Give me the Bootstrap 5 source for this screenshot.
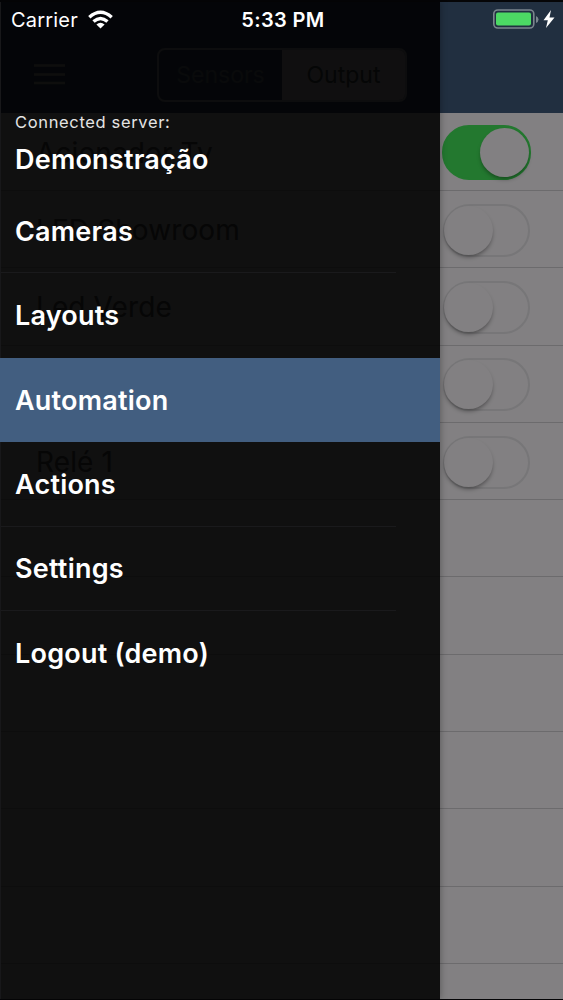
<!DOCTYPE html>
<html lang="en">
<head>
<meta charset="utf-8">
<meta name="viewport" content="width=device-width, initial-scale=1">
<title>Automation</title>
<link href="https://cdn.jsdelivr.net/npm/bootstrap@5.3.0/dist/css/bootstrap.min.css" rel="stylesheet">
<style>
body{font-family:Inter,"Liberation Sans",sans-serif;background:#050507;height:1000px}
.phone{width:563px;height:1000px;background:#050507}
.screen{height:999px;padding-top:2px}
.page-body{height:997px;background:#828082}
.topbar{height:111px;background:#212f40;padding:46px 156px 11px 34px}
.segmented{width:250px;height:54px;border:2px solid #6a6a70;border-radius:8px}
.segment{font-size:23px;color:#4c5058}
.segment.on{background:#807e80;color:#2c3034}
.device{height:77.3px;border-bottom:1px solid #6c6b6d;padding:2px 33px 0 36px;font-size:28px;color:#303030}
.device:first-child{height:78px}
.device span:first-child{letter-spacing:.1px}
.toggle{width:87px;height:53px;border-radius:27px;border:2px solid #777678;display:flex;align-items:center}
.knob{width:49px;height:49px;border-radius:50%;background:#828082;box-shadow:0 3px 4px -1px rgba(0,0,0,.4);margin-left:-1px}
.toggle.on{width:89px;height:55px;background:#23782f;border-color:#23782f;justify-content:flex-end;margin-right:-1px}
.drawer{width:440px;height:997px;top:2px;background:rgba(0,0,0,.88);box-shadow:0 0 7px rgba(0,0,0,.35);border-left:1px solid #18181a;color:#fff}
.server{padding:110px 0 0 14px;height:187px}
.server-label{font-size:16.5px;line-height:20px;letter-spacing:.65px;color:#e4e4e4}
.server-name,.entry{font-size:27px;font-weight:600;white-space:nowrap;letter-spacing:.22px}
.server-name{line-height:34px;margin-top:11px}
.entry{height:84.4px;padding:1.6px 0 0 14px}
.entry::after{content:"";height:1px;width:395px;background:#1a1a1c;position:absolute;left:0;bottom:0}
.entry:last-child::after,.entry.current::after,.entry.before-current::after{display:none}
.entry.current{background:#425e80;margin-left:-1px;padding-left:15px}
.status{height:38px;width:563px;color:#fff;font-size:20px;line-height:38px}
.carrier{padding:0 0 0 11px;letter-spacing:.2px}
.clock{padding:1px 0 0 3px;letter-spacing:.35px}
.power{padding:0 8px 2px 0}
</style>
</head>
<body>
<div class="phone position-relative overflow-hidden mx-auto">
  <div class="screen overflow-hidden">
    <div class="page-body">
      <header class="topbar d-flex justify-content-between align-items-center">
        <svg width="32" height="22" viewBox="0 0 32 22" stroke="#77766f" stroke-width="2.5"><path d="M0 1.500h31M0 10.500h31M0 19h31"/></svg>
        <div class="segmented d-flex overflow-hidden">
          <div class="segment w-50 d-flex align-items-center justify-content-center">Sensors</div>
          <div class="segment on w-50 d-flex align-items-center justify-content-center">Output</div>
        </div>
      </header>
      <main>
        <div class="device d-flex align-items-center justify-content-between"><span>Acionador Tv</span><span class="toggle on"><span class="knob"></span></span></div>
        <div class="device d-flex align-items-center justify-content-between"><span>LED Showroom</span><span class="toggle"><span class="knob"></span></span></div>
        <div class="device d-flex align-items-center justify-content-between"><span>Led Verde</span><span class="toggle"><span class="knob"></span></span></div>
        <div class="device d-flex align-items-center justify-content-between"><span></span><span class="toggle"><span class="knob"></span></span></div>
        <div class="device d-flex align-items-center justify-content-between"><span>Relé 1</span><span class="toggle"><span class="knob"></span></span></div>
        <div class="device"></div><div class="device"></div><div class="device"></div>
        <div class="device"></div><div class="device"></div><div class="device"></div>
      </main>
    </div>
  </div>

  <aside class="drawer position-absolute start-0">
    <div class="server">
      <div class="server-label">Connected server:</div>
      <div class="server-name">Demonstração</div>
    </div>
    <nav>
      <div class="entry position-relative d-flex align-items-center">Cameras</div>
      <div class="entry position-relative d-flex align-items-center before-current">Layouts</div>
      <div class="entry position-relative d-flex align-items-center current">Automation</div>
      <div class="entry position-relative d-flex align-items-center">Actions</div>
      <div class="entry position-relative d-flex align-items-center">Settings</div>
      <div class="entry position-relative d-flex align-items-center">Logout (demo)</div>
    </nav>
  </aside>

  <div class="status position-absolute top-0 start-0 row g-0">
    <div class="carrier col-4 d-flex align-items-center">
      <span>Carrier</span>
      <svg width="27" height="20" viewBox="0 0 26 20" fill="none" stroke="#fff" stroke-width="3.4" style="margin-left:9px"><path d="M1.8 7.200Q13-2.800 24.200 7.200M6 11.600Q13 5.400 20 11.600"/><path d="M13 18.500L8.900 14.400Q13 11.200 17.100 14.400Z" fill="#fff" stroke="none"/></svg>
    </div>
    <div class="clock col-4 text-center fw-semibold">5:33 PM</div>
    <div class="power col-4 d-flex align-items-center justify-content-end">
      <svg width="64" height="22" viewBox="0 0 64 22"><rect x="2.800" y="2" width="40" height="18" rx="4" fill="none" stroke="#7b858d" stroke-width="1.600"/><rect x="5" y="4.500" width="35" height="13" rx="2" fill="#4cd964"/><path d="M45 8v7q2.500-1 2.500-3.500T45 8" fill="#7b858d"/><path d="M60 2L52.500 12.200h4.300L55 20 63.500 9.500H58.500Z" fill="#fff"/></svg>
    </div>
  </div>
</div>
<script src="https://cdn.jsdelivr.net/npm/bootstrap@5.3.0/dist/js/bootstrap.bundle.min.js"></script>
</body>
</html>
